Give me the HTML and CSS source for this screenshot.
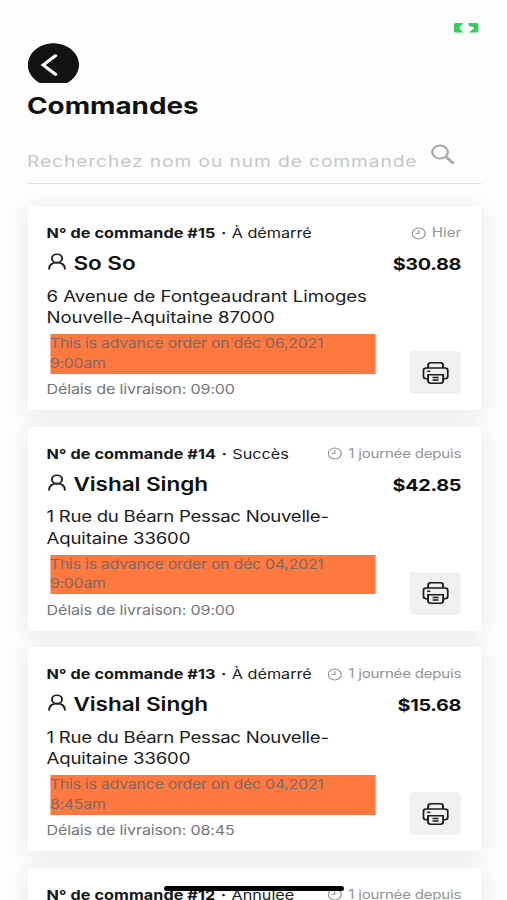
FILE: index.html
```html
<!DOCTYPE html>
<html lang="fr">
<head>
<meta charset="utf-8">
<title>Commandes</title>
<link rel="stylesheet" href="styles.css">
</head>
<body>
<svg class="defs" aria-hidden="true">
  <symbol id="user" viewBox="0 0 15 18"><g fill="none" stroke="#222" stroke-width="1.600" stroke-linecap="round"><circle cx="7.500" cy="5.400" r="4.200"/><path d="M.9 16C1 11.900 3.500 9.600 7.500 9.600S14 11.900 14.100 16"/></g></symbol>
  <symbol id="clock" viewBox="0 0 12 12"><g fill="none" stroke="#929294" stroke-width="1"><circle cx="6" cy="6" r="5.4"/><path d="M6 2.8V6H3.3"/></g></symbol>
  <symbol id="printer" viewBox="0 0 22 22"><g fill="none" stroke="#1c1c1e" stroke-width="1.600" stroke-linejoin="round"><path d="M4.800 6V3.300Q4.800 .8 7 .8H15Q17.200 .8 17.200 3.300V6"/><path d="M4.500 16.800H3.300Q.8 16.800 .8 14.300V8.500Q.8 6 3.300 6H18.700Q21.200 6 21.200 8.500V14.300Q21.200 16.800 18.700 16.800H17.500"/><path d="M4 12.800H18M4.700 12.800V19Q4.700 21.200 7 21.200H15Q17.300 21.200 17.300 19V12.800M4 9.200H6.500"/><path d="M8.500 15.500H13.500M8.500 18H13.500" stroke-width="1.300"/></g></symbol>
</svg>
<main class="app">
  <div class="status">
    <svg class="battery" width="21" height="10" viewBox="0 0 21 10"><path fill="#30d158" d="M2 0H8.200L5 4.200V5.500L8.200 9.500H2Q0 9.500 0 7.500V2Q0 0 2 0ZM12.500 0H18.800Q20.800 0 20.800 2V7.500Q20.800 9.500 18.800 9.500H12.500L17 5.500V4.200L12.500 2.800Z"/></svg>
  </div>
  <header class="top">
    <div class="back"><svg width="16" height="24" viewBox="0 0 16 24"><path d="M13.300 2.700L3 12L13.300 21.300" fill="none" stroke="#fff" stroke-width="2.900" stroke-linecap="round"/></svg></div>
    <h1 class="title">Commandes</h1>
    <div class="search">
      <span class="placeholder">Recherchez nom ou num de commande</span>
      <svg class="glass" width="20" height="21" viewBox="0 0 20 21"><g fill="none" stroke="#aaa"><circle cx="7.700" cy="8" r="6.500" stroke-width="2"/><path d="M12.300 12.700L19 19.500" stroke-width="2.600"/></g></svg>
    </div>
  </header>
  <section class="orders">
    <article class="card">
      <div class="head"><span><b class="num">N° de commande #15</b><i class="dot">·</i><span class="state">À démarré</span></span><span class="ago today"><svg class="clock"><use href="#clock"/></svg><span>Hier</span></span></div>
      <div class="client"><svg class="user"><use href="#user"/></svg><span class="name">So So</span><span class="price">$30.88</span></div>
      <div class="details"><div class="info">
        <p class="address">6 Avenue de Fontgeaudrant Limoges<br>Nouvelle-Aquitaine 87000</p>
        <p class="advance">This is advance order on déc 06,2021<br>9:00am</p>
        <p class="delay">Délais de livraison: 09:00</p>
      </div><div class="print"><svg class="printer"><use href="#printer"/></svg></div></div>
    </article>
    <article class="card">
      <div class="head"><span><b class="num">N° de commande #14</b><i class="dot">·</i><span class="state">Succès</span></span><span class="ago"><svg class="clock"><use href="#clock"/></svg><span>1 journée depuis</span></span></div>
      <div class="client"><svg class="user"><use href="#user"/></svg><span class="name">Vishal Singh</span><span class="price">$42.85</span></div>
      <div class="details"><div class="info">
        <p class="address tight">1 Rue du Béarn Pessac Nouvelle-<br><span class="loose">Aquitaine 33600</span></p>
        <p class="advance">This is advance order on déc 04,2021<br>9:00am</p>
        <p class="delay">Délais de livraison: 09:00</p>
      </div><div class="print"><svg class="printer"><use href="#printer"/></svg></div></div>
    </article>
    <article class="card">
      <div class="head"><span><b class="num">N° de commande #13</b><i class="dot">·</i><span class="state">À démarré</span></span><span class="ago"><svg class="clock"><use href="#clock"/></svg><span>1 journée depuis</span></span></div>
      <div class="client"><svg class="user"><use href="#user"/></svg><span class="name">Vishal Singh</span><span class="price">$15.68</span></div>
      <div class="details"><div class="info">
        <p class="address tight">1 Rue du Béarn Pessac Nouvelle-<br><span class="loose">Aquitaine 33600</span></p>
        <p class="advance">This is advance order on déc 04,2021<br>8:45am</p>
        <p class="delay">Délais de livraison: 08:45</p>
      </div><div class="print"><svg class="printer"><use href="#printer"/></svg></div></div>
    </article>
    <article class="card">
      <div class="head"><span><b class="num">N° de commande #12</b><i class="dot">·</i><span class="state">Annulée</span></span><span class="ago"><svg class="clock"><use href="#clock"/></svg><span>1 journée depuis</span></span></div>
    </article>
  </section>
</main>
<div class="home-bar"></div>
</body>
</html>
```

FILE: styles.css
```css
* { box-sizing: border-box; }
html, body { margin: 0; height: 900px; overflow: hidden; }
body { background: #fdfdfd; color: #1c1c1e; font-family: Inter, "Liberation Sans", sans-serif; position: relative; }
p, h1 { margin: 0; }
.defs { position: absolute; width: 0; height: 0; }

/* The interface is drawn for a narrower device and widened horizontally. */
.app { width: 422.5px; height: 900px; padding: 0 21.7px 0 22.5px; transform: scaleX(1.2); transform-origin: 0 0; white-space: nowrap; overflow: hidden; }

.status { height: 43px; display: flex; justify-content: flex-end; padding: 22.500px 2px 0 0; }
.battery { width: 21px; height: 10px; }
.back { width: 43.300px; height: 40px; display: flex; align-items: flex-start; padding: 9.500px 0 0 10.500px; background: radial-gradient(ellipse 21.600px 21.800px at 50% 21.800px, #101214 97%, transparent 100%); }
.title { font-size: 23.200px; line-height: 30px; margin-top: 8px; font-weight: 700; color: #111; }
.search { height: 62.500px; display: flex; justify-content: space-between; border-bottom: 1.500px solid #dfdfe0; padding-right: 21.500px; }
.placeholder { font-size: 16px; line-height: 20px; margin-top: 29.500px; color: #c6c6c8; letter-spacing: .75px; }
.glass { margin-top: 23px; flex: none; }

.orders { margin-top: 22.500px; display: flex; flex-direction: column; gap: 16.600px; }
.card { height: 204px; flex: none; background: #fff; border-radius: 3px; padding: 17px 16.500px 0 16.300px; box-shadow: 0 3px 22px rgba(0, 0, 0, .09); }
.head { height: 20px; line-height: 20px; display: flex; justify-content: space-between; font-size: 13.500px; }
.num { font-weight: 700; color: #151515; letter-spacing: .07px; }
.dot { font-style: normal; font-weight: 700; margin: 0 4.500px; }
.ago { display: flex; align-items: center; gap: 5px; color: #949496; font-size: 12.600px; letter-spacing: -.2px; }
.today { letter-spacing: 0; }
.clock { width: 12px; height: 13px; }
.client { height: 24px; margin-top: 9.200px; display: flex; line-height: 24px; }
.user { width: 15px; height: 18px; margin: 1px 6.400px 0 1px; }
.name { font-weight: 600; font-size: 18.800px; color: #111; letter-spacing: -.05px; }
.price { margin-left: auto; font-weight: 700; font-size: 16.500px; color: #111; letter-spacing: -.25px; }
.details { display: flex; justify-content: space-between; margin-top: 9.500px; }
.info { width: 274px; }
.address { font-size: 15.500px; line-height: 21.400px; letter-spacing: -.06px; }
.tight { letter-spacing: -.23px; }
.loose { letter-spacing: -.12px; }
.advance { background: #ff783f; margin: 5.500px 0 5.500px 2.800px; height: 39.700px; font-size: 13.200px; line-height: 19.700px; letter-spacing: -.18px; color: #80695f; }
.delay { font-size: 13.400px; line-height: 20px; letter-spacing: -.12px; color: #74757a; }
.print { width: 43px; height: 43px; margin-top: 65.500px; border-radius: 4px; background: #eff1f2; display: flex; align-items: center; justify-content: center; }
.printer { width: 22px; height: 22px; }

.home-bar { position: absolute; left: 164px; top: 886px; width: 180px; height: 5px; border-radius: 3px; background: #000; }
```
